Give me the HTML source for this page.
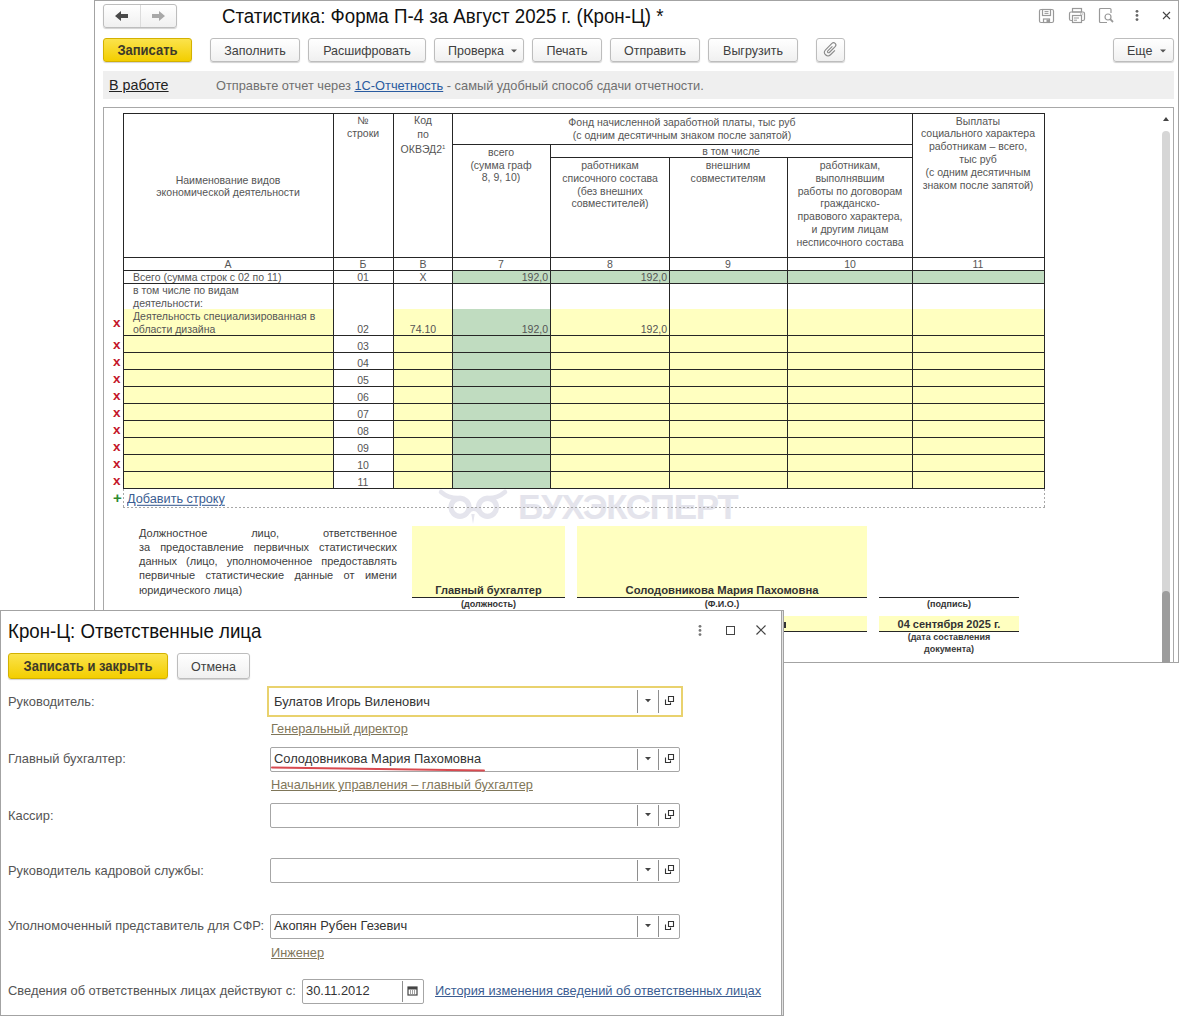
<!DOCTYPE html>
<html><head><meta charset="utf-8">
<style>
*{box-sizing:border-box;margin:0;padding:0}
html,body{width:1179px;height:1016px;overflow:hidden;background:#fff;font-family:"Liberation Sans",sans-serif;color:#333;position:relative}
.a{position:absolute}
.btn{position:absolute;height:24px;border:1px solid #bdbdbd;border-radius:3px;background:linear-gradient(#ffffff,#f0f0f0);box-shadow:0 1px 1px rgba(0,0,0,.18);font-size:12.5px;color:#404040;text-align:center;line-height:22px;white-space:nowrap}
.ybtn{position:absolute;height:24px;border:1px solid #d3b100;border-radius:3px;background:linear-gradient(#fbe34c,#f3ce00);box-shadow:0 1px 1px rgba(0,0,0,.18);font-size:13px;font-weight:bold;color:#3d3a2a;text-align:center;line-height:22px;white-space:nowrap}
.hl{position:absolute;height:1px;background:#262626}
.vl{position:absolute;width:1px;background:#262626}
.t{position:absolute;font-size:10.5px;color:#555;text-align:center;line-height:13px;white-space:nowrap}
.yel{position:absolute;background:#ffffc0}
.grn{position:absolute;background:#c0dcc0}
.rx{position:absolute;left:113px;font-size:13.5px;font-weight:bold;color:#c4162a;line-height:12px}
.lbl{position:absolute;left:8px;font-size:12.9px;color:#555;white-space:nowrap;line-height:15px}
.inp{position:absolute;left:270px;width:410px;height:25px;border:1px solid #a6a6a6;border-radius:2px;background:#fff}
.ival{position:absolute;left:274px;font-size:12.9px;color:#333;white-space:nowrap;line-height:15px}
.dv{position:absolute;width:1px;background:#8e8e8e}
.lnk{position:absolute;left:271px;font-size:12.75px;color:#7f7659;text-decoration:underline;white-space:nowrap;line-height:15px}
.bt{display:inline-block;position:relative;top:1px;transform:scaleY(1.08);transform-origin:center 60%}
</style></head><body>

<!-- MAIN WINDOW -->
<div class="a" style="left:94px;top:0;width:1085px;height:663px;border:1px solid #a3a3a3;background:#fff"></div>

<!-- nav buttons -->
<div class="btn" style="left:103px;top:4px;width:74px;height:24px"></div>
<div class="a" style="left:140px;top:5px;width:1px;height:22px;background:#dcdcdc"></div>

<div class="a" style="left:222px;top:5px;font-size:18.7px;color:#111;white-space:nowrap;transform:scaleY(1.05);transform-origin:left top">Статистика: Форма П-4 за Август 2025 г. (Крон-Ц) *</div>

<!-- toolbar -->
<div class="ybtn" style="left:103px;top:38px;width:89px"><span class="bt">Записать</span></div>
<div class="btn" style="left:210px;top:38px;width:90px"><span class="bt">Заполнить</span></div>
<div class="btn" style="left:308px;top:38px;width:118px"><span class="bt">Расшифровать</span></div>
<div class="btn" style="left:434px;top:38px;width:90px;text-align:left;padding-left:13px"><span class="bt">Проверка</span></div>
<div class="btn" style="left:532px;top:38px;width:70px"><span class="bt">Печать</span></div>
<div class="btn" style="left:610px;top:38px;width:90px"><span class="bt">Отправить</span></div>
<div class="btn" style="left:708px;top:38px;width:90px"><span class="bt">Выгрузить</span></div>
<div class="btn" style="left:816px;top:38px;width:29px"></div>
<div class="btn" style="left:1113px;top:38px;width:61px;text-align:left;padding-left:13px"><span class="bt">Еще</span></div>

<!-- info bar -->
<div class="a" style="left:103px;top:71px;width:1071px;height:28px;background:#efefef"></div>
<div class="a" style="left:109px;top:77px;font-size:14.3px;color:#222;text-decoration:underline;white-space:nowrap">В работе</div>
<div class="a" style="left:216px;top:78px;font-size:12.8px;color:#707070;white-space:nowrap">Отправьте отчет через <span style="color:#2a5ba0;text-decoration:underline">1С-Отчетность</span> - самый удобный способ сдачи отчетности.</div>

<!-- content panel -->
<div class="a" style="left:103px;top:107px;width:1071px;height:560px;border-top:1px solid #a8a8a8;border-left:1px solid #a8a8a8"></div>

<!--TABLE START-->
<div class="grn" style="left:452px;top:270px;width:592px;height:13px"></div>
<div class="yel" style="left:123px;top:309px;width:210px;height:26px"></div>
<div class="yel" style="left:393px;top:309px;width:59px;height:26px"></div>
<div class="grn" style="left:452px;top:309px;width:98px;height:26px"></div>
<div class="yel" style="left:550px;top:309px;width:494px;height:26px"></div>
<div class="yel" style="left:123px;top:335px;width:210px;height:153px"></div>
<div class="yel" style="left:393px;top:335px;width:59px;height:153px"></div>
<div class="grn" style="left:452px;top:335px;width:98px;height:153px"></div>
<div class="yel" style="left:550px;top:335px;width:494px;height:153px"></div>
<div class="vl" style="left:123px;top:113px;height:376px;background:#262626"></div>
<div class="vl" style="left:333px;top:113px;height:376px;background:#262626"></div>
<div class="vl" style="left:393px;top:113px;height:376px;background:#262626"></div>
<div class="vl" style="left:452px;top:113px;height:376px;background:#262626"></div>
<div class="vl" style="left:912px;top:113px;height:376px;background:#262626"></div>
<div class="vl" style="left:1044px;top:113px;height:376px;background:#262626"></div>
<div class="vl" style="left:550px;top:144px;height:345px;background:#262626"></div>
<div class="vl" style="left:669px;top:157px;height:332px;background:#262626"></div>
<div class="vl" style="left:787px;top:157px;height:332px;background:#262626"></div>
<div class="hl" style="left:123px;top:113px;width:922px;background:#262626"></div>
<div class="hl" style="left:452px;top:144px;width:461px;background:#262626"></div>
<div class="hl" style="left:550px;top:157px;width:363px;background:#262626"></div>
<div class="hl" style="left:123px;top:257px;width:922px;background:#262626"></div>
<div class="hl" style="left:123px;top:270px;width:922px;background:#262626"></div>
<div class="hl" style="left:123px;top:283px;width:922px;background:#262626"></div>
<div class="hl" style="left:123px;top:335px;width:922px;background:#262626"></div>
<div class="hl" style="left:123px;top:352px;width:922px;background:#262626"></div>
<div class="hl" style="left:123px;top:369px;width:922px;background:#262626"></div>
<div class="hl" style="left:123px;top:386px;width:922px;background:#262626"></div>
<div class="hl" style="left:123px;top:403px;width:922px;background:#262626"></div>
<div class="hl" style="left:123px;top:420px;width:922px;background:#262626"></div>
<div class="hl" style="left:123px;top:437px;width:922px;background:#262626"></div>
<div class="hl" style="left:123px;top:454px;width:922px;background:#262626"></div>
<div class="hl" style="left:123px;top:471px;width:922px;background:#262626"></div>
<div class="hl" style="left:123px;top:488px;width:922px;background:#262626"></div>
<div class="t" style="left:78px;top:173.5px;width:300px;">Наименование видов</div>
<div class="t" style="left:78px;top:186.0px;width:300px;">экономической деятельности</div>
<div class="t" style="left:213px;top:114.0px;width:300px;">№</div>
<div class="t" style="left:213px;top:127.0px;width:300px;">строки</div>
<div class="t" style="left:273px;top:114.0px;width:300px;">Код</div>
<div class="t" style="left:273px;top:127.5px;width:300px;">по</div>
<div class="t" style="left:273px;top:140.5px;width:300px;">ОКВЭД2<sup style="font-size:6px;vertical-align:4px">1</sup></div>
<div class="t" style="left:532px;top:116.2px;width:300px;">Фонд начисленной заработной платы, тыс руб</div>
<div class="t" style="left:532px;top:129.0px;width:300px;">(с одним десятичным знаком после запятой)</div>
<div class="t" style="left:351px;top:145.8px;width:300px;">всего</div>
<div class="t" style="left:351px;top:158.5px;width:300px;">(сумма граф</div>
<div class="t" style="left:351px;top:171.20000000000002px;width:300px;">8, 9, 10)</div>
<div class="t" style="left:581px;top:144.5px;width:300px;">в том числе</div>
<div class="t" style="left:460px;top:158.7px;width:300px;">работникам</div>
<div class="t" style="left:460px;top:171.6px;width:300px;">списочного состава</div>
<div class="t" style="left:460px;top:184.5px;width:300px;">(без внешних</div>
<div class="t" style="left:460px;top:197.39999999999998px;width:300px;">совместителей)</div>
<div class="t" style="left:578px;top:158.7px;width:300px;">внешним</div>
<div class="t" style="left:578px;top:171.6px;width:300px;">совместителям</div>
<div class="t" style="left:700px;top:158.7px;width:300px;">работникам,</div>
<div class="t" style="left:700px;top:171.6px;width:300px;">выполнявшим</div>
<div class="t" style="left:700px;top:184.5px;width:300px;">работы по договорам</div>
<div class="t" style="left:700px;top:197.39999999999998px;width:300px;">гражданско-</div>
<div class="t" style="left:700px;top:210.29999999999998px;width:300px;">правового характера,</div>
<div class="t" style="left:700px;top:223.2px;width:300px;">и другим лицам</div>
<div class="t" style="left:700px;top:236.1px;width:300px;">несписочного состава</div>
<div class="t" style="left:828px;top:114.5px;width:300px;">Выплаты</div>
<div class="t" style="left:828px;top:127.4px;width:300px;">социального характера</div>
<div class="t" style="left:828px;top:140.3px;width:300px;">работникам – всего,</div>
<div class="t" style="left:828px;top:153.2px;width:300px;">тыс руб</div>
<div class="t" style="left:828px;top:166.1px;width:300px;">(с одним десятичным</div>
<div class="t" style="left:828px;top:179.0px;width:300px;">знаком после запятой)</div>
<div class="t" style="left:78px;top:257.5px;width:300px;">А</div>
<div class="t" style="left:213px;top:257.5px;width:300px;">Б</div>
<div class="t" style="left:273px;top:257.5px;width:300px;">В</div>
<div class="t" style="left:351px;top:257.5px;width:300px;">7</div>
<div class="t" style="left:460px;top:257.5px;width:300px;">8</div>
<div class="t" style="left:578px;top:257.5px;width:300px;">9</div>
<div class="t" style="left:700px;top:257.5px;width:300px;">10</div>
<div class="t" style="left:828px;top:257.5px;width:300px;">11</div>
<div class="t" style="left:133px;top:270.5px;text-align:left;">Всего (сумма строк с 02 по 11)</div>
<div class="t" style="left:213px;top:270.5px;width:300px;">01</div>
<div class="t" style="left:273px;top:270.5px;width:300px;">Х</div>
<div class="t" style="left:348px;top:270.5px;width:200px;text-align:right;">192,0</div>
<div class="t" style="left:467px;top:270.5px;width:200px;text-align:right;">192,0</div>
<div class="t" style="left:133px;top:283.5px;text-align:left;">в том числе по видам</div>
<div class="t" style="left:133px;top:296.5px;text-align:left;">деятельности:</div>
<div class="t" style="left:133px;top:309.5px;text-align:left;">Деятельность специализированная в</div>
<div class="t" style="left:133px;top:322.5px;text-align:left;">области дизайна</div>
<div class="t" style="left:213px;top:322.5px;width:300px;">02</div>
<div class="t" style="left:273px;top:322.5px;width:300px;">74.10</div>
<div class="t" style="left:348px;top:322.5px;width:200px;text-align:right;">192,0</div>
<div class="t" style="left:467px;top:322.5px;width:200px;text-align:right;">192,0</div>
<div class="t" style="left:213px;top:339.5px;width:300px;">03</div>
<div class="t" style="left:213px;top:356.5px;width:300px;">04</div>
<div class="t" style="left:213px;top:373.5px;width:300px;">05</div>
<div class="t" style="left:213px;top:390.5px;width:300px;">06</div>
<div class="t" style="left:213px;top:407.5px;width:300px;">07</div>
<div class="t" style="left:213px;top:424.5px;width:300px;">08</div>
<div class="t" style="left:213px;top:441.5px;width:300px;">09</div>
<div class="t" style="left:213px;top:458.5px;width:300px;">10</div>
<div class="t" style="left:213px;top:475.5px;width:300px;">11</div>
<div class="rx" style="top:317px">x</div>
<div class="rx" style="top:339px">x</div>
<div class="rx" style="top:356px">x</div>
<div class="rx" style="top:373px">x</div>
<div class="rx" style="top:390px">x</div>
<div class="rx" style="top:407px">x</div>
<div class="rx" style="top:424px">x</div>
<div class="rx" style="top:441px">x</div>
<div class="rx" style="top:458px">x</div>
<div class="rx" style="top:475px">x</div>
<!--TABLE END-->

<!--REST START-->
<!-- watermark -->
<div class="a" style="left:436px;top:486px;width:75px;height:40px">
<svg width="75" height="40" viewBox="0 0 75 40"><g fill="none" stroke="#e5e5ed" stroke-linecap="round"><circle cx="24" cy="21.3" r="9" stroke-width="5.2"/><circle cx="51.5" cy="21.3" r="9" stroke-width="5.2"/><path d="M5 6 Q13 13 25 12" stroke-width="4.5"/><path d="M69 6 Q61 13 50 12" stroke-width="4.5"/><path d="M32 26 Q37.7 20 43.5 26" stroke-width="4"/></g><path d="M35.3 28 L37 38 L38.7 28Z" fill="#e5e5ed"/></svg>
</div>
<div class="a" style="left:518px;top:487px;font-size:35px;font-weight:bold;color:#e4e4ec;white-space:nowrap;line-height:40px;letter-spacing:-1.3px">БУХЭКСПЕРТ</div>
<!-- add row -->
<div class="a" style="left:113px;top:491px;font-size:15px;font-weight:bold;color:#2f8a2f;line-height:14px">+</div>
<div class="a" style="left:127px;top:491px;font-size:12.7px;color:#3b5d92;text-decoration:underline;text-underline-offset:2px;white-space:nowrap;line-height:15px;transform:scaleY(1.06);transform-origin:left top">Добавить строку</div>
<div class="a" style="left:123px;top:507px;width:922px;height:1px;background:repeating-linear-gradient(90deg,#a8a8a8 0 2px,transparent 2px 4px)"></div>
<div class="a" style="left:123px;top:489px;width:1px;height:19px;background:repeating-linear-gradient(180deg,#a8a8a8 0 2px,transparent 2px 4px)"></div>
<div class="a" style="left:1044px;top:489px;width:1px;height:19px;background:repeating-linear-gradient(180deg,#a8a8a8 0 2px,transparent 2px 4px)"></div>


<!-- signature block -->
<div class="a" style="left:139px;top:527px;width:258px;font-size:11px;line-height:13.9px;color:#404040;text-align:justify;text-align-last:justify">Должностное лицо, ответственное за&nbsp;предоставление первичных статистических данных (лицо, уполномоченное предоставлять первичные статистические данные от имени</div>
<div class="a" style="left:139px;top:583px;font-size:11px;line-height:14px;color:#404040;white-space:nowrap">юридического лица)</div>

<div class="yel" style="left:412px;top:526px;width:153px;height:71px"></div>
<div class="hl" style="left:412px;top:597px;width:153px"></div>
<div class="a" style="left:412px;top:583px;width:153px;text-align:center;font-size:11px;font-weight:bold;color:#333;line-height:14px">Главный бухгалтер</div>
<div class="a" style="left:412px;top:598px;width:153px;text-align:center;font-size:9px;font-weight:bold;color:#333;line-height:12px">(должность)</div>

<div class="yel" style="left:577px;top:526px;width:290px;height:71px"></div>
<div class="hl" style="left:577px;top:597px;width:290px"></div>
<div class="a" style="left:577px;top:583px;width:290px;text-align:center;font-size:11.25px;font-weight:bold;color:#333;line-height:14px">Солодовникова Мария Пахомовна</div>
<div class="a" style="left:577px;top:598px;width:290px;text-align:center;font-size:9px;font-weight:bold;color:#333;line-height:12px">(Ф.И.О.)</div>

<div class="hl" style="left:879px;top:597px;width:140px"></div>
<div class="a" style="left:879px;top:598px;width:140px;text-align:center;font-size:9px;font-weight:bold;color:#333;line-height:12px">(подпись)</div>

<div class="yel" style="left:577px;top:616px;width:290px;height:15px"></div>
<div class="hl" style="left:577px;top:631px;width:290px"></div>
<div class="a" style="left:784px;top:622px;width:2px;height:6px;background:#333"></div>

<div class="yel" style="left:879px;top:616px;width:140px;height:15px"></div>
<div class="hl" style="left:879px;top:631px;width:140px"></div>
<div class="a" style="left:879px;top:617px;width:140px;text-align:center;font-size:11px;font-weight:bold;color:#333;line-height:14px">04 сентября 2025 г.</div>
<div class="a" style="left:879px;top:632px;width:140px;text-align:center;font-size:9px;font-weight:bold;color:#3a3a3a;line-height:11.5px">(дата составления<br>документа)</div>

<!-- scrollbar -->
<div class="a" style="left:1173px;top:107px;width:1px;height:556px;background:#a8a8a8"></div>
<svg class="a" style="left:1162px;top:116px" width="8" height="6"><path d="M1 5 L4 1 L7 5Z" fill="#444"/></svg>
<div class="a" style="left:1162px;top:131px;width:8px;height:532px;background:#d6d6d6;border-radius:4px 4px 0 0"></div>
<div class="a" style="left:1162px;top:591px;width:8px;height:72px;background:#9c9c9c;border-radius:4px 4px 0 0"></div>

<!-- nav arrows -->
<svg class="a" style="left:114px;top:10px" width="16" height="12"><path d="M1 6 L7 1 L7 4 L14 4 L14 8 L7 8 L7 11Z" fill="#4a4a4a"/></svg>
<svg class="a" style="left:150px;top:10px" width="16" height="12"><path d="M15 6 L9 1 L9 4 L2 4 L2 8 L9 8 L9 11Z" fill="#a8a8a8"/></svg>

<!-- title icons -->
<svg class="a" style="left:1038px;top:8px" width="17" height="16" viewBox="0 0 17 16"><g fill="none" stroke="#999" stroke-width="1.2"><rect x="1.5" y="1.5" width="14" height="13" rx="1.5"/><rect x="4.5" y="1.5" width="8" height="6"/><rect x="5.5" y="11" width="6" height="3.5"/></g><path d="M6.5 3.6h4M6.5 5.4h4" stroke="#999" stroke-width="1"/><rect x="8.5" y="11.5" width="3" height="3" fill="#999"/></svg>
<svg class="a" style="left:1068px;top:7px" width="18" height="17" viewBox="0 0 18 17"><g fill="none" stroke="#999" stroke-width="1.2"><rect x="4.5" y="1.5" width="9" height="3.5"/><rect x="1.5" y="5" width="15" height="8.5" rx="1.5"/><rect x="4.5" y="8.5" width="9" height="7" fill="#fff"/></g><path d="M6 11h5M6 13.2h3M12 7h1.5M14.2 7h1" stroke="#999" stroke-width="1"/></svg>
<svg class="a" style="left:1098px;top:7px" width="17" height="17" viewBox="0 0 17 17"><path d="M9 15.5H2.5a1 1 0 0 1-1-1V2.5a1 1 0 0 1 1-1h9.5a1 1 0 0 1 1 1V6" fill="none" stroke="#999" stroke-width="1.2"/><circle cx="10" cy="10" r="3" fill="none" stroke="#999" stroke-width="1.2"/><path d="M12.2 12.2L15 15" stroke="#999" stroke-width="1.8"/></svg>
<svg class="a" style="left:1134px;top:9px" width="6" height="13"><circle cx="3" cy="2.3" r="1.4" fill="#666"/><circle cx="3" cy="6.4" r="1.4" fill="#666"/><circle cx="3" cy="10.6" r="1.4" fill="#666"/></svg>
<svg class="a" style="left:1162px;top:11px" width="10" height="10"><path d="M1 1L8 8M8 1L1 8" stroke="#444" stroke-width="1.1"/></svg>

<!-- toolbar dropdown triangles & clip -->
<svg class="a" style="left:511px;top:49px" width="6" height="4"><path d="M0 0.5H6L3 3.5Z" fill="#555"/></svg>
<svg class="a" style="left:1160px;top:49px" width="6" height="4"><path d="M0 0.5H6L3 3.5Z" fill="#555"/></svg>
<svg class="a" style="left:822px;top:41px" width="18" height="18" viewBox="0 0 18 18"><path transform="translate(8.7 8.6) rotate(45)" d="M-1.1 -3.5 V3 A1.1 1.1 0 0 0 1.1 3 V-5.2 A2.3 2.3 0 0 0 -3.5 -5.2 V3.8 A3.5 3.5 0 0 0 3.5 3.8 V-2.5" fill="none" stroke="#8a8a8a" stroke-width="1.1"/></svg>

<!--REST END-->

<!-- DIALOG -->
<div class="a" style="left:0;top:610px;width:784px;height:406px;border:1px solid #a3a3a3;background:#fff"></div><div class="a" style="left:781px;top:611px;width:1px;height:404px;background:#a3a3a3"></div><div class="a" style="left:782px;top:611px;width:1px;height:404px;background:#e2e2e2"></div>
<div class="a" style="left:8px;top:620px;font-size:18.7px;color:#111;white-space:nowrap;transform:scaleY(1.04);transform-origin:left top">Крон-Ц: Ответственные лица</div>
<div class="ybtn" style="left:8px;top:653px;width:160px;height:26px;line-height:24px"><span class="bt">Записать и закрыть</span></div>
<div class="btn" style="left:177px;top:653px;width:73px;height:26px;line-height:24px"><span class="bt">Отмена</span></div>

<!--DLG START-->
<!-- dialog icons -->
<svg class="a" style="left:697px;top:624px" width="6" height="13"><circle cx="3" cy="2.3" r="1.4" fill="#777"/><circle cx="3" cy="6.4" r="1.4" fill="#777"/><circle cx="3" cy="10.6" r="1.4" fill="#777"/></svg>
<div class="a" style="left:726px;top:626px;width:9px;height:9px;border:1.2px solid #444"></div>
<svg class="a" style="left:755px;top:624px" width="12" height="12"><path d="M1.5 1.5L10.5 10.5M10.5 1.5L1.5 10.5" stroke="#444" stroke-width="1.2"/></svg>

<!-- labels -->
<div class="lbl" style="top:694px">Руководитель:</div>
<div class="lbl" style="top:751px">Главный бухгалтер:</div>
<div class="lbl" style="top:808px">Кассир:</div>
<div class="lbl" style="top:863px">Руководитель кадровой службы:</div>
<div class="lbl" style="top:918px">Уполномоченный представитель для СФР:</div>
<div class="lbl" style="top:983px">Сведения об ответственных лицах действуют с:</div>

<!-- inputs -->
<div class="a" style="left:267px;top:686px;width:416px;height:31px;border:2px solid #e9d26e;background:#fff"></div>
<div class="ival" style="top:694px">Булатов Игорь Виленович</div>
<div class="dv" style="left:637px;top:690px;height:23px"></div><div class="dv" style="left:658px;top:690px;height:23px"></div>
<svg class="a" style="left:645px;top:698px" width="6" height="5"><path d="M0 1H6L3 4.2Z" fill="#444"/></svg>
<svg class="a" style="left:664px;top:695px" width="11" height="11"><path d="M4.5 1.5h5v5h-5z" fill="none" stroke="#333" stroke-width="1.1"/><path d="M1.5 4.5v5h5V7.5" fill="none" stroke="#333" stroke-width="1.1"/></svg>
<div class="lnk" style="top:721px">Генеральный директор</div>

<div class="inp" style="top:747px"></div>
<div class="ival" style="top:751px">Солодовникова Мария Пахомовна</div>
<div class="dv" style="left:637px;top:749px;height:21px"></div><div class="dv" style="left:658px;top:749px;height:21px"></div>
<svg class="a" style="left:645px;top:756px" width="6" height="5"><path d="M0 1H6L3 4.2Z" fill="#444"/></svg>
<svg class="a" style="left:664px;top:753px" width="11" height="11"><path d="M4.5 1.5h5v5h-5z" fill="none" stroke="#333" stroke-width="1.1"/><path d="M1.5 4.5v5h5V7.5" fill="none" stroke="#333" stroke-width="1.1"/></svg>
<svg class="a" style="left:270px;top:764px" width="220" height="9"><path d="M2 3.5 Q100 4.5 214 6.5" stroke="#d84a50" stroke-width="2" fill="none" stroke-linecap="round"/></svg>
<div class="lnk" style="top:777px">Начальник управления – главный бухгалтер</div>

<div class="inp" style="top:803px"></div>
<div class="dv" style="left:637px;top:805px;height:21px"></div><div class="dv" style="left:658px;top:805px;height:21px"></div>
<svg class="a" style="left:645px;top:812px" width="6" height="5"><path d="M0 1H6L3 4.2Z" fill="#444"/></svg>
<svg class="a" style="left:664px;top:809px" width="11" height="11"><path d="M4.5 1.5h5v5h-5z" fill="none" stroke="#333" stroke-width="1.1"/><path d="M1.5 4.5v5h5V7.5" fill="none" stroke="#333" stroke-width="1.1"/></svg>

<div class="inp" style="top:858px"></div>
<div class="dv" style="left:637px;top:860px;height:21px"></div><div class="dv" style="left:658px;top:860px;height:21px"></div>
<svg class="a" style="left:645px;top:867px" width="6" height="5"><path d="M0 1H6L3 4.2Z" fill="#444"/></svg>
<svg class="a" style="left:664px;top:864px" width="11" height="11"><path d="M4.5 1.5h5v5h-5z" fill="none" stroke="#333" stroke-width="1.1"/><path d="M1.5 4.5v5h5V7.5" fill="none" stroke="#333" stroke-width="1.1"/></svg>

<div class="inp" style="top:914px"></div>
<div class="ival" style="top:918px">Акопян Рубен Гезевич</div>
<div class="dv" style="left:637px;top:916px;height:21px"></div><div class="dv" style="left:658px;top:916px;height:21px"></div>
<svg class="a" style="left:645px;top:923px" width="6" height="5"><path d="M0 1H6L3 4.2Z" fill="#444"/></svg>
<svg class="a" style="left:664px;top:920px" width="11" height="11"><path d="M4.5 1.5h5v5h-5z" fill="none" stroke="#333" stroke-width="1.1"/><path d="M1.5 4.5v5h5V7.5" fill="none" stroke="#333" stroke-width="1.1"/></svg>
<div class="lnk" style="top:945px">Инженер</div>

<div class="inp" style="left:302px;top:979px;width:122px"></div>
<div class="ival" style="left:306px;top:983px">30.11.2012</div>
<div class="dv" style="left:402px;top:981px;height:21px"></div>
<svg class="a" style="left:407px;top:985px" width="11" height="11"><rect x="1" y="2" width="9" height="8" fill="none" stroke="#444" stroke-width="1.2"/><rect x="1" y="2" width="9" height="2.5" fill="#444"/><path d="M3 6h1M5 6h1M7 6h1M3 8h1M5 8h1M7 8h1" stroke="#444" stroke-width="1"/></svg>
<div class="a" style="left:435px;top:983px;font-size:12.85px;color:#3b5d92;text-decoration:underline;white-space:nowrap;line-height:15px">История изменения сведений об ответственных лицах</div>

<!--DLG END-->
</body></html>
